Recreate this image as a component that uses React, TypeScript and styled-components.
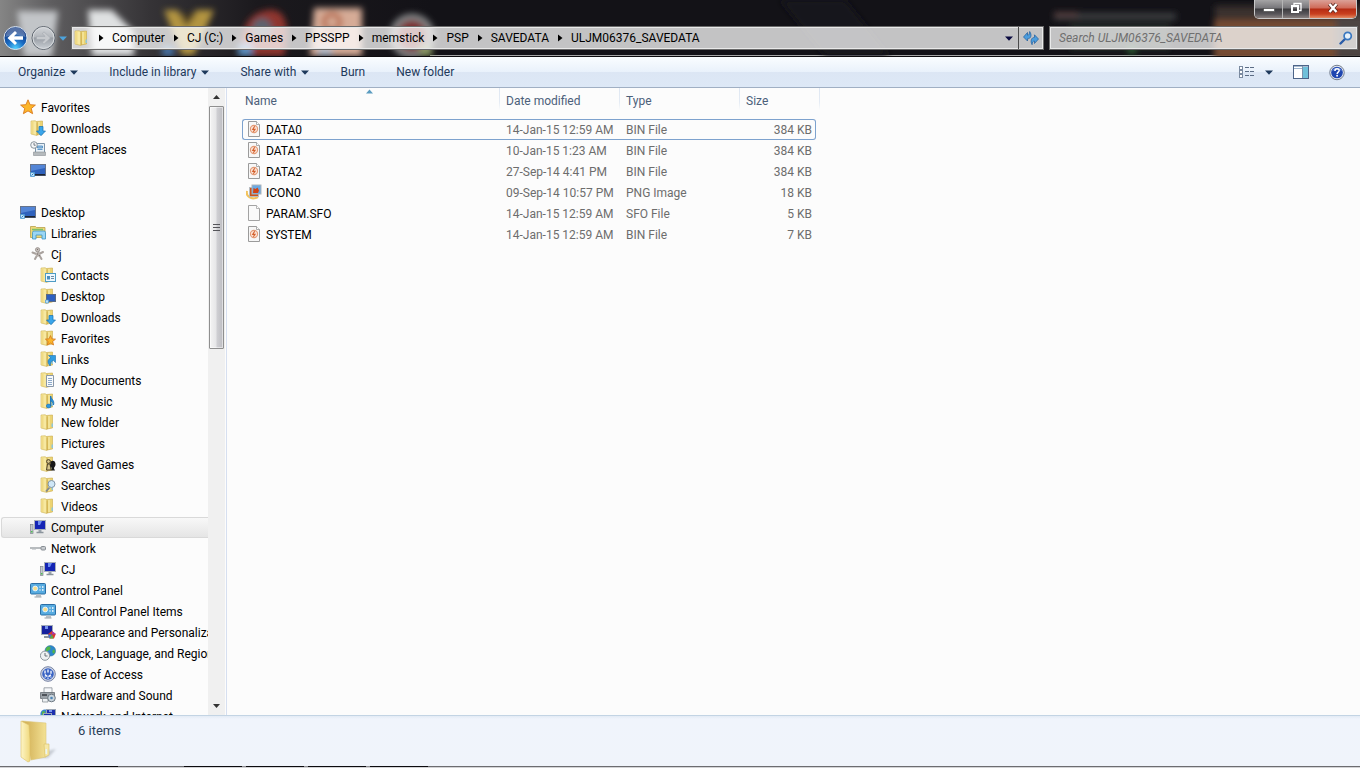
import React from "react";
import styled, { createGlobalStyle } from "styled-components";

const GlobalStyle = createGlobalStyle`
  *, *::before, *::after { box-sizing: border-box; }
  body {
    margin: 0;
    font-family: Roboto, "Noto Sans", sans-serif;
    font-size: 12px;
    line-height: 20px;
    color: #000;
    background: #fcfcfc;
  }
  button, input { font: inherit; color: inherit; }
`;

/* ---------- window frame ---------- */

const Window = styled.div`
  display: flex;
  flex-direction: column;
  height: 100vh;
  overflow: hidden;
`;

const Frame = styled.header`
  position: relative;
  flex: none;
  background: #131217;
  border-bottom: 1px solid #0c0b0e;
  overflow: hidden;
`;

const Wallpaper = styled.div`
  position: absolute;
  inset: 0;
  display: flex;
  justify-content: space-between;
  border-bottom: 1px solid #a5a5a5;
  pointer-events: none;
  svg { flex: none; }
`;

const TitleBar = styled.div`
  position: relative;
  display: flex;
  justify-content: flex-end;
  height: 26px;
  padding-right: 3px;
`;

const WindowButtons = styled.div`
  display: flex;
  height: 19px;
  border: 1px solid #c9c9c9;
  border-top: 0;
  border-radius: 0 0 5px 5px;
  overflow: hidden;
`;

const WindowButton = styled.button<{ $close?: boolean }>`
  display: flex;
  align-items: flex-start;
  justify-content: center;
  width: ${(p) => (p.$close ? 47 : 27)}px;
  padding: 2px 0 0;
  border: 0;
  border-left: 1px solid ${(p) => (p.$close ? "#c9a79f" : "#b5b5b5")};
  background: ${(p) =>
    p.$close
      ? "linear-gradient(#dba197 0, #cf6a58 8px, #b52c14 9px, #c9401f 14px, #e38a62 18px)"
      : "linear-gradient(#a5a4a5 0, #77767a 8px, #3c3b3e 9px, #59565a 14px, #89807f 18px)"};
  &:first-child { border-left: 0; }
`;

const NavBar = styled.div`
  position: relative;
  display: flex;
  align-items: center;
  height: 30px;
  padding: 0 2px 6px 3px;
`;

const NavButton = styled.button`
  display: flex;
  padding: 0;
  border: 0;
  background: none;
`;

const HistoryButton = styled(NavButton)`
  margin: 0 4px 0 2px;
`;

const glass = `
  height: 24px;
  border: 1px solid #6a6a6a;
  box-shadow: inset 0 0 0 1px #e9e9e9;
  background: rgba(255, 255, 255, 0.75);
`;

const AddressBar = styled.nav`
  ${glass}
  display: flex;
  flex: 1;
  align-items: center;
  min-width: 0;
  padding-left: 2px;
`;

const Crumbs = styled.ol`
  display: flex;
  flex: 1;
  margin: 0;
  padding: 0;
  list-style: none;
`;

const Crumb = styled.li`
  display: flex;
  align-items: center;
  svg { margin: 0 8px 0 9px; }
`;

const CrumbLink = styled.a`
  color: #000;
  text-decoration: none;
  white-space: nowrap;
`;

const DropButton = styled(NavButton)`
  padding: 0 5px;
`;

const RefreshButton = styled(NavButton)`
  align-items: center;
  justify-content: center;
  align-self: stretch;
  width: 25px;
  border-left: 1px solid #4b4b4b;
`;

const SearchBox = styled.label`
  ${glass}
  display: flex;
  align-items: center;
  width: 309px;
  margin-left: 5px;
  padding: 0 4px 0 9px;
`;

const SearchInput = styled.input`
  flex: 1;
  min-width: 0;
  padding: 0;
  border: 0;
  outline: 0;
  background: transparent;
  &::placeholder { color: #6f6f6f; font-style: italic; opacity: 1; }
`;

/* ---------- command bar ---------- */

const CommandBar = styled.div`
  display: flex;
  flex: none;
  align-items: center;
  height: 31px;
  padding: 0 15px 0 18px;
  gap: 31px;
  background: linear-gradient(#fafdff 0, #e9f1fb 15px, #dce6f4 15px, #dde8f6 30px);
  border-bottom: 1px solid #a0afc3;
`;

const Command = styled.button`
  display: flex;
  align-items: center;
  gap: 5px;
  padding: 0;
  border: 0;
  background: none;
  color: #1e395b;
  white-space: nowrap;
`;

const ViewTools = styled.div`
  display: flex;
  align-items: center;
  gap: 20px;
  margin-left: auto;
`;

const ViewCommand = styled(Command)`
  gap: 10px;
`;

/* ---------- body ---------- */

const Body = styled.div`
  display: flex;
  flex: 1;
  min-height: 0;
`;

const Sidebar = styled.aside`
  display: flex;
  flex: none;
  width: 227px;
  border-right: 1px solid #d6dff0;
`;

const Tree = styled.ul`
  flex: 1;
  min-width: 0;
  margin: 0;
  padding: 9px 0 0 1px;
  list-style: none;
  overflow: hidden;
`;

const TreeItem = styled.li<{ $gap?: boolean }>`
  margin-top: ${(p) => (p.$gap ? 21 : 0)}px;
`;

const TreeLink = styled.a<{ $level: number; $selected?: boolean }>`
  display: flex;
  align-items: center;
  gap: 5px;
  height: 21px;
  padding-left: ${(p) => 18 + p.$level * 10}px;
  border: 1px solid ${(p) => (p.$selected ? "#d9d9d9" : "transparent")};
  border-right: 0;
  border-radius: 3px 0 0 3px;
  background: ${(p) => (p.$selected ? "linear-gradient(#f8f8f8, #e5e5e5)" : "none")};
  color: #000;
  text-decoration: none;
  white-space: nowrap;
  overflow: hidden;
  svg { flex: none; margin-bottom: 1px; }
`;

const ScrollTrack = styled.div`
  display: flex;
  flex-direction: column;
  flex: none;
  width: 17px;
  margin-right: 1px;
  padding: 0 1px;
  background: #f0f0f0;
`;

const ScrollButton = styled.button`
  display: flex;
  align-items: center;
  justify-content: center;
  flex: none;
  height: 18px;
  padding: 0;
  border: 0;
  background: none;
`;

const ScrollThumb = styled.div`
  display: flex;
  align-items: center;
  justify-content: center;
  flex: 9;
  border: 1px solid #8f8f8f;
  border-radius: 1px;
  background: linear-gradient(90deg, #f4f4f4 0, #e6e6e8 6px, #cfcfd3 7px, #bdbdc2 13px);
  box-shadow: inset 0 0 0 1px rgba(255, 255, 255, 0.5);
`;

const ScrollRest = styled.div`
  flex: 13;
`;

const Content = styled.main`
  flex: 1;
  min-width: 0;
  padding-left: 15px;
  background: #fcfcfc;
`;

const FileTable = styled.table`
  width: 578px;
  table-layout: fixed;
  border-collapse: separate;
  border-spacing: 0;
`;

const HeadCell = styled.th<{ $first?: boolean }>`
  position: relative;
  height: 31px;
  padding: 3px 6px 8px ${(p) => (p.$first ? 3 : 6)}px;
  font-weight: 400;
  text-align: left;
  color: #4c607a;
  background: linear-gradient(#dfe7f2, #e4ebf4 14px, #fcfcfc 22px) right top / 1px 22px no-repeat;
`;

const SortMark = styled.svg`
  position: absolute;
  top: 1px;
  left: calc(50% - 5px);
`;

const Cell = styled.td<{ $focus?: boolean; $align?: string }>`
  height: 21px;
  padding: 2px 3px 0 6px;
  line-height: 17px;
  text-align: ${(p) => p.$align ?? "left"};
  color: #6d6d6d;
  white-space: nowrap;
  border: 0 solid ${(p) => (p.$focus ? "#7da2ce" : "transparent")};
  border-width: 1px 0;
  &:first-child {
    padding-left: 3px;
    border-left-width: 1px;
    border-radius: 3px 0 0 3px;
    color: #000;
  }
  &:last-child {
    border-right-width: 1px;
    border-radius: 0 3px 3px 0;
  }
`;

const FileName = styled.span`
  display: flex;
  align-items: flex-start;
  gap: 4px;
  height: 17px;
  svg { flex: none; margin-top: -1px; }
`;

/* ---------- details pane ---------- */

const Details = styled.footer`
  display: flex;
  flex: none;
  gap: 19px;
  height: 51px;
  padding: 4px 19px 0;
  border-top: 1px solid #c3d4e4;
  background: linear-gradient(#e3ebf5 0, #f0f4fc 3px, #f0f4fb 100%);
  color: #2b3e58;
  font-size: 13px;
`;

const ItemCount = styled.p`
  margin: 1px 0 0;
`;

const DesktopEdge = styled.div`
  flex: none;
  height: 2px;
  border-bottom: 1px solid #d3d3d6;
  background: linear-gradient(
    90deg, #6c6c70 0 60px, #0c0b0e 60px 118px, #6c6c70 118px 184px,
    #0c0b0e 184px 242px, #8f8f93 242px 246px, #0c0b0e 246px 304px,
    #8f8f93 304px 308px, #0c0b0e 308px 366px, #8f8f93 366px 370px,
    #0c0b0e 370px 428px, #6c6c70 428px
  );
`;

/* ---------- small glyphs ---------- */

const DownArrow = ({ fill = "#1e395b" }: { fill?: string }) => (
  <svg width="8" height="5" aria-hidden="true">
    <path d="M0 0.500h8L4 4.800z" fill={fill} />
  </svg>
);

const CrumbArrow = () => (
  <svg width="5" height="8" aria-hidden="true">
    <path d="M0 0.500L4.500 4L0 7.500z" fill="#000" />
  </svg>
);

const BlurredDesktopLeft = () => (
  <svg width="900" height="56" aria-hidden="true">
    <defs>
      <filter id="soft" x="-30%" y="-30%" width="160%" height="160%">
        <feGaussianBlur stdDeviation="3" />
      </filter>
      <filter id="softText" x="-10%" y="-100%" width="120%" height="300%">
        <feGaussianBlur stdDeviation="1.800" />
      </filter>
      <linearGradient id="sky" x1="0" x2="1">
        <stop offset="0" stopColor="#858585" />
        <stop offset="0.120" stopColor="#5e5d5f" />
        <stop offset="0.350" stopColor="#353336" />
        <stop offset="0.600" stopColor="#1b191d" />
        <stop offset="1" stopColor="#131217" />
      </linearGradient>
    </defs>
    <rect width="430" height="56" fill="url(#sky)" />
    <g filter="url(#soft)">
      <path d="M17 11h41l-6 46H24z" fill="#c2c5c8" />
      <path d="M88 10h24l22 22v24H92z" fill="#dfe1e2" />
      <path d="M164 10h14l8 16 10-16h18l-20 45h-12z" fill="#b3943f" />
      <path d="M180 14h16l-9 12z" fill="#4a3a20" />
      <path d="M162 46h12v10h-12z" fill="#4674a8" />
      <path d="M268 10c20-2 22 20 16 46h-42c-4-24 6-44 26-46z" fill="#8f342d" />
      <circle cx="262" cy="28" r="10" fill="#5b6470" />
      <path d="M238 44h14v12h-14z" fill="#5b8fc0" />
      <path d="M314 8h48v48h-52z" fill="#d6ab96" />
      <circle cx="332" cy="22" r="8" fill="none" stroke="#b05a36" strokeWidth="4" />
      <path d="M318 46h14v10h-14z" fill="#b4bcc8" />
      <circle cx="412" cy="36" r="19" fill="#7c2a2a" stroke="#808283" strokeWidth="7" />
      <path d="M420 46h12v10h-12z" fill="#8a9a64" />
    </g>
    <path
      d="M597 7h166"
      stroke="#59585c"
      strokeWidth="5"
      strokeDasharray="14 2 9 3 22 2"
      filter="url(#softText)"
    />
    <path d="M780 0h65l45 56h-65z" fill="#19181c" filter="url(#soft)" />
  </svg>
);

const BlurredDesktopRight = () => (
  <svg width="330" height="56" aria-hidden="true">
    <g filter="url(#soft)">
      <rect x="24" y="13" width="122" height="7" fill="#3a3c40" />
      <rect x="24" y="12" width="24" height="5" fill="#543c3c" />
      <rect x="40" y="24" width="100" height="26" fill="#242928" />
      <circle cx="102" cy="51" r="3" fill="#357a3e" />
      <rect x="185" y="6" width="160" height="15" fill="#3a302d" />
      <rect x="184" y="20" width="122" height="40" fill="#764b31" />
      <rect x="306" y="16" width="30" height="44" fill="#4d4442" />
    </g>
  </svg>
);

const BackIcon = () => (
  <svg width="25" height="26" viewBox="0 0 25 26" aria-hidden="true">
    <defs>
      <radialGradient id="orb" cx="0.500" cy="0.950" r="0.750">
        <stop offset="0" stopColor="#4fd0ff" />
        <stop offset="0.500" stopColor="#1a6cc4" />
        <stop offset="1" stopColor="#143c86" />
      </radialGradient>
    </defs>
    <circle cx="12.500" cy="13" r="11.500" fill="url(#orb)" stroke="#dde6ef" strokeWidth="1" />
    <path d="M2.500 12a10 10 0 0 1 20 0c-6-2-14-2-20 0z" fill="#fff" opacity="0.280" />
    <path d="M4.500 13l7.500-7 2 2-3 3.200h9v3.600h-9l3 3.200-2 2z" fill="#fff" />
  </svg>
);

const ForwardIcon = () => (
  <svg width="29" height="26" viewBox="0 0 29 26" aria-hidden="true">
    <defs>
      <linearGradient id="pale" x1="0" y1="0" x2="0" y2="1">
        <stop offset="0" stopColor="#d3d6da" />
        <stop offset="0.450" stopColor="#b4b8bd" />
        <stop offset="0.500" stopColor="#989da4" />
        <stop offset="1" stopColor="#ccd1d7" />
      </linearGradient>
    </defs>
    <circle cx="15.500" cy="13" r="11.500" fill="url(#pale)" stroke="#5e656e" />
    <circle cx="15.500" cy="13" r="10.500" fill="none" stroke="#d9dcdf" />
    <path d="M22.500 13l-6.500-6.200-1.800 1.800 2.900 2.800H8.500v3.200h8.600l-2.900 2.800 1.800 1.800z" fill="#c6c9cd" stroke="#a3a8ae" strokeWidth="0.600" />
  </svg>
);

const RefreshIcon = () => (
  <svg width="16" height="16" viewBox="0 0 16 16" aria-hidden="true">
    <path d="M0.500 7L4.500 2.500v2.700c1.500 0 2-1.200 2.200-3.700 2.300 3.300 1.500 7.300-2.200 7.300V11z" fill="#4b9ddd" stroke="#1f5c9c" strokeWidth="0.700" />
    <path d="M15.500 9L11.500 4.800v2.600c-3.500 0-4.300 4-2.400 7.300.2-2.500 1-3.700 2.400-3.700v2.500z" fill="#4b9ddd" stroke="#1f5c9c" strokeWidth="0.700" />
  </svg>
);

const SearchIcon = () => (
  <svg width="14" height="14" viewBox="0 0 14 14" aria-hidden="true">
    <path d="M1.500 12.500L6 8" stroke="#2a5ca8" strokeWidth="2.400" strokeLinecap="round" />
    <circle cx="8.700" cy="5" r="3.600" fill="#e6f1fa" stroke="#3a78c0" strokeWidth="1.700" />
  </svg>
);

const ViewsIcon = () => (
  <svg width="16" height="14" viewBox="0 0 16 14" aria-hidden="true">
    {[1, 5, 9].map((y) => (
      <g key={y}>
        <rect x="0.500" y={y + 0.5} width="3" height="3" fill="#fff" stroke="#7a8aa0" />
        <path d={`M6 ${y + 1.5}h4M11 ${y + 1.5}h4`} stroke="#5c6d85" />
      </g>
    ))}
  </svg>
);

const PaneIcon = () => (
  <svg width="16" height="14" viewBox="0 0 16 14" aria-hidden="true">
    <rect x="0.500" y="0.500" width="15" height="13" fill="#fff" stroke="#4c6488" />
    <path d="M1 1.500h14" stroke="#a9bcd2" />
    <path d="M1 3.500h8" stroke="#9db4cc" />
    <rect x="10" y="2" width="5" height="11" fill="#6fc0da" />
    <path d="M9.500 1v12" stroke="#7d93ad" />
  </svg>
);

const HelpIcon = () => (
  <svg width="16" height="17" viewBox="0 0 17 17" aria-hidden="true">
    <circle cx="8.500" cy="8.500" r="7.700" fill="#e8ecf2" stroke="#6c7688" />
    <circle cx="8.500" cy="8.500" r="6.200" fill="#1f46b0" />
    <path d="M3 7a6 6 0 0 1 11 0c-3-1.500-8-1.500-11 0z" fill="#7f9ce0" opacity="0.700" />
    <path d="M6.300 6.800c0-3 4.500-3 4.500-.3 0 1.700-2.200 1.700-2.200 3.600" fill="none" stroke="#fff" strokeWidth="1.600" />
    <circle cx="8.600" cy="12" r="1" fill="#fff" />
  </svg>
);

/* ---------- item icons ---------- */

type IconName =
  | "folder" | "folder-down" | "folder-contact" | "folder-screen" | "folder-star" | "folder-link"
  | "folder-doc" | "folder-music" | "folder-chess" | "folder-search" | "star" | "recent"
  | "desktop" | "libraries" | "user" | "computer" | "network" | "panel" | "appearance" | "clock"
  | "access" | "hardware" | "internet" | "bin" | "image" | "blank";

const star = "M8 0.800l2.100 4.900 5.300.4-4.100 3.400 1.300 5.200L8 11.900l-4.600 2.800 1.300-5.200L.6 6.100l5.300-.4z";

const Screen = () => (
  <>
    <rect x="0.500" y="2.500" width="15" height="11" fill="#2f62bd" stroke="#66738a" />
    <path d="M1 3h14v3L1 9z" fill="#6c9de6" opacity="0.600" />
    <path d="M1 12h14v1.500H1z" fill="#1d2533" />
    <path d="M0.500 10.500h4v4h-4z" fill="#bfe2fa" stroke="#4a98d0" strokeWidth="0.800" />
    <path d="M1.500 13.500l2-2" stroke="#2a7cc0" />
  </>
);

const FolderShape = () => (
  <>
    <path d="M6.500 1.500L12.500 1v13L7 15z" fill="#ecd472" stroke="#c9aa48" strokeWidth="0.600" />
    <path d="M9 2v12" stroke="#f6e8a4" strokeWidth="1.400" />
    <path d="M1 1L5.500 0.800 7 2.500V15.500L1 14z" fill="#f7e8a0" stroke="#cdb04c" strokeWidth="0.600" />
    <path d="M2.500 1.500v12.500" stroke="#f0da84" strokeWidth="2" />
    <path d="M7 2.500v12.500" stroke="#c8a544" strokeWidth="0.700" />
    <path d="M11.500 9.500h1.500v3.500h-1.500z" fill="#8fc6d8" />
  </>
);

const Monitor = () => (
  <>
    <rect x="0.500" y="5.500" width="2.500" height="9" fill="#c3cad0" stroke="#7f878e" strokeWidth="0.700" />
    <path d="M1 12h1.500v1.500H1z" fill="#4fc24f" />
    <rect x="4.500" y="1.500" width="11" height="9" fill="#1424b4" stroke="#a9b0bb" />
    <path d="M8 2h4l-2 4H8z" fill="#6c8cf0" />
    <path d="M8.500 11h3v2h-3z" fill="#9aa3ac" />
    <path d="M6.500 13.500h7" stroke="#8b949c" strokeWidth="1.500" />
  </>
);

const shapes: Record<IconName, React.ReactNode> = {
  folder: null,
  "folder-down": <path d="M9 6.500h4v4.500h2.500L11 15.700 6.500 11H9z" fill="#3aa5ea" stroke="#1670b0" strokeWidth="0.700" />,
  "folder-contact": (
    <>
      <rect x="5.500" y="6.500" width="10" height="8" fill="#eef7fd" stroke="#4f9cc4" />
      <path d="M7 9h3v3.500H7z" fill="#4b8fc0" />
      <path d="M11 9.500h3M11 11.500h3" stroke="#6f8da5" />
    </>
  ),
  "folder-screen": (
    <>
      <rect x="6.500" y="6.500" width="9" height="7" fill="#2c5fc0" stroke="#5b6a80" />
      <path d="M5.500 12h3v3h-3z" fill="#bfe2fa" stroke="#4a98d0" strokeWidth="0.700" />
    </>
  ),
  "folder-star": <path d={star} transform="translate(5 5) scale(0.680)" fill="#fbb52a" stroke="#d5761a" strokeWidth="1.200" />,
  "folder-link": <path d="M8.500 4.500h7v7l-2.300-2.200c-2 1-2.700 2.700-3 5.700-3.200-3.200-2.700-6.700.6-8.200z" fill="#2f9be0" stroke="#1b6fb0" strokeWidth="0.600" />,
  "folder-doc": (
    <>
      <path d="M6.500 3.500h7v11h-7z" fill="#f8fafc" stroke="#8a98a8" />
      <path d="M8 6.500h4M8 8.500h4M8 10.500h4M8 12.500h4" stroke="#7f9fc4" strokeWidth="0.900" />
    </>
  ),
  "folder-music": (
    <>
      <path d="M10.500 3c.2 3 4.500 4 3 9-.2-2.500-1.300-3.500-3-4" fill="#2b98e0" stroke="#1c72b5" strokeWidth="0.800" />
      <ellipse cx="8.700" cy="13" rx="2.400" ry="1.900" fill="#2b98e0" stroke="#1c72b5" strokeWidth="0.600" />
      <path d="M10.700 3v10" stroke="#1c72b5" strokeWidth="1.200" />
    </>
  ),
  "folder-chess": (
    <>
      <circle cx="8.500" cy="5.500" r="1.900" fill="#d7c58a" stroke="#4c4128" />
      <path d="M7.500 8h2.500l1 6H6.500z" fill="#d7c58a" stroke="#4c4128" />
      <path d="M10.500 6c2-2.500 5.500-1 5 3-.5 2-1.500 2-1.500 3.500l1 2h-4l.8-2.500-1.800-2z" fill="#181818" />
    </>
  ),
  "folder-search": (
    <>
      <path d="M6 14.500l3.500-4" stroke="#808890" strokeWidth="1.800" />
      <circle cx="11.500" cy="7" r="3.500" fill="#cfe7f7" stroke="#8296a8" />
    </>
  ),
  star: <path d={star} fill="#fcb62b" stroke="#d9781c" strokeWidth="0.900" />,
  recent: (
    <>
      <path d="M5.500 2.500h9v9h-9z" fill="#e9f1f8" stroke="#7c93a8" />
      <path d="M7.500 5h5v2h-5zM7.500 8.500h5" fill="#9cc2e2" stroke="#4f8fc4" strokeWidth="0.900" />
      <path d="M3.500 11h12v3.500h-12z" fill="#b5babd" stroke="#8b9195" strokeWidth="0.600" />
      <circle cx="4" cy="4" r="3.300" fill="#f4f6f8" stroke="#8b959c" />
      <path d="M4 2v2.200h1.700" fill="none" stroke="#555e66" strokeWidth="0.800" />
    </>
  ),
  desktop: <Screen />,
  libraries: (
    <>
      <path d="M0.500 1.500h5l1 1h8.500v10H0.500z" fill="#eed878" stroke="#b9a14a" strokeWidth="0.800" />
      <path d="M2 4.500h11" stroke="#7cc069" strokeWidth="1.300" />
      <path d="M2.500 7.500q0-1.500 1.500-1.500h10q1.500 0 1.500 1.500V14h-3.500v-4h-6v4H2.500z" fill="#9bd6f5" stroke="#3c95c4" strokeWidth="0.800" />
    </>
  ),
  user: (
    <>
      <path d="M7.500 4.500l1 3M2.500 6.500l4 1.500M5 13l2-3.500M11.500 13L9.500 9.500M13 6L9 8" stroke="#a9a29e" strokeWidth="2" strokeLinecap="round" />
      <circle cx="7.600" cy="3.800" r="2.200" fill="#c3bcb8" stroke="#8d8581" strokeWidth="0.700" />
      <circle cx="7.900" cy="8.500" r="2.200" fill="#b8b1ad" />
      <path d="M7 8h.9M8.800 9.500h.9M7 3.500h.8" stroke="#6a625e" />
    </>
  ),
  computer: <Monitor />,
  network: (
    <>
      <path d="M0 8h11" stroke="#a2a7ab" strokeWidth="1.600" />
      <rect x="11" y="6.500" width="4.500" height="3.500" rx="1" fill="#c8ccd0" stroke="#888e94" />
      <path d="M2 9.500h4" stroke="#d3d6d9" />
    </>
  ),
  panel: (
    <>
      <rect x="0.500" y="1.500" width="15" height="10.500" rx="1" fill="#57abe0" stroke="#2b6ea5" />
      <circle cx="5.200" cy="6.500" r="2.400" fill="#f5dd8a" stroke="#e8f5ff" />
      <path d="M9.500 5h1M12 5h1.500M9.500 8h1M12 8h1.500" stroke="#fff" strokeWidth="1.300" />
      <path d="M6 12.300h5v2.500H6z" fill="#b9c0c6" />
      <path d="M4.500 15h7" stroke="#9aa2a9" />
    </>
  ),
  appearance: (
    <>
      <rect x="1.500" y="1.500" width="11" height="9" fill="#16219e" stroke="#a2abb8" />
      <path d="M5 2h3v3H5z" fill="#7592f0" />
      <path d="M4 13h6" stroke="#8d969e" strokeWidth="2" />
      <path d="M12 7l3.800 3-1.800 4.500H9.500L8 10z" fill="#d93a2e" />
      <path d="M12 10.500l-4 0 1.500 4z" fill="#3b73dc" />
      <path d="M12 10.500l-2.500 4h4z" fill="#57b246" />
      <path d="M12 7v3.500l3.800-.5z" fill="#a33cae" />
    </>
  ),
  clock: (
    <>
      <circle cx="10.300" cy="5.800" r="5.300" fill="#2c86cc" stroke="#2a6a98" strokeWidth="0.500" />
      <path d="M8 1.500c3-.5 3 1.500 2 3s-3 1-3.500 3C5 5.500 6 2.500 8 1.500zM13 4.500c2 0 2.500 2 1.300 4-2 .3-2.500-2-1.300-4z" fill="#51b648" />
      <circle cx="5" cy="10.700" r="4.600" fill="#eef1f3" stroke="#8b959d" />
      <path d="M5 8v3h2.500" fill="none" stroke="#5a646c" strokeWidth="0.900" />
    </>
  ),
  access: (
    <>
      <circle cx="8" cy="8" r="7.300" fill="#d6dbe8" stroke="#7481a3" />
      <circle cx="8" cy="8" r="5.800" fill="#3a64c4" />
      <path d="M5 4.500v4q3 4 6 0v-4M8 3.500v4" fill="none" stroke="#fff" strokeWidth="1.300" strokeDasharray="3 1" />
      <path d="M5.500 11.500l-.8-.8M10.500 11.500l.8-.8M8 13v-1.500" stroke="#dfe7fa" strokeWidth="1.200" />
    </>
  ),
  hardware: (
    <>
      <path d="M4 0.800h8V6H4z" fill="#f6f8fa" stroke="#8a9299" strokeWidth="0.800" />
      <path d="M0.500 5.500h14v6h-14z" fill="#9aa1a7" stroke="#666d74" strokeWidth="0.800" />
      <path d="M2 8h5" stroke="#343a40" strokeWidth="1.500" />
      <path d="M2.500 11.500H8V15H2.500z" fill="#eef1f3" stroke="#7c848b" strokeWidth="0.700" />
      <circle cx="11.500" cy="11" r="3.800" fill="#c9d4dc" stroke="#6c7780" />
      <circle cx="11.500" cy="11" r="1.300" fill="#4d84b5" />
    </>
  ),
  internet: (
    <>
      <circle cx="5" cy="6" r="4.600" fill="#3583cc" />
      <path d="M2 4c2-2 3-1 3 .5S3 7 2 8z" fill="#56b64c" />
      <rect x="6.500" y="1.500" width="9" height="7" fill="#1c2fae" stroke="#9aa5b4" />
      <path d="M9 2h3v2H9z" fill="#7c98f0" />
      <rect x="3.500" y="5.500" width="8" height="6" fill="#1c2fae" stroke="#9aa5b4" />
    </>
  ),
  bin: (
    <>
      <path d="M2.500 0.500h8l3 3v12h-11z" fill="#f7f7f7" stroke="#9b9b9b" />
      <path d="M10.500 0.500v3h3" fill="#fff" stroke="#9b9b9b" strokeWidth="0.800" />
      <circle cx="8" cy="8" r="3.600" fill="#fbe3d6" stroke="#e39a76" strokeWidth="1.100" />
      <path d="M8.700 5.300L6.800 8.300h2.200L7.400 10.800" fill="none" stroke="#d4602c" strokeWidth="1.200" />
    </>
  ),
  image: (
    <>
      <path d="M1 7c-1.500 5 4 9.500 11 6" fill="none" stroke="#f2c35c" strokeWidth="2.200" />
      <rect x="3.500" y="3.500" width="9" height="9" fill="#c9551e" stroke="#b7bcc2" />
      <rect x="6" y="1" width="9" height="9" fill="#69a9e4" stroke="#aeb4ba" />
      <path d="M7 9l0.500-5 2 1 2-1.500 1.500 3-1 2.500z" fill="#d24314" />
    </>
  ),
  blank: (
    <>
      <path d="M2.500 0.500h8l3 3v12h-11z" fill="#fafafa" stroke="#a3a3a3" />
      <path d="M10.500 0.500v3h3" fill="#fff" stroke="#a3a3a3" strokeWidth="0.800" />
    </>
  ),
};

const Icon = ({ name }: { name: IconName }) => (
  <svg width="16" height="16" viewBox="0 0 16 16" aria-hidden="true">
    {name.startsWith("folder") && <FolderShape />}
    {shapes[name]}
  </svg>
);

const LargeFolder = () => (
  <svg width="40" height="44" viewBox="0 0 40 44" aria-hidden="true">
    <defs>
      <linearGradient id="cover" x1="0" x2="1">
        <stop offset="0" stopColor="#fdf5c6" />
        <stop offset="1" stopColor="#f0d97e" />
      </linearGradient>
      <linearGradient id="inside" x1="0" x2="1">
        <stop offset="0" stopColor="#cda94e" />
        <stop offset="1" stopColor="#f3e194" />
      </linearGradient>
      <filter id="shade" x="-20%" y="-20%" width="140%" height="140%">
        <feGaussianBlur stdDeviation="1.200" />
      </filter>
    </defs>
    <path d="M28 31l9-2-8 9H14z" fill="#b4b9c2" opacity="0.700" filter="url(#shade)" />
    <path d="M3 1l24 2v34l-15 3z" fill="url(#inside)" stroke="#dcc679" strokeWidth="0.600" />
    <path d="M25 24h5v11l-4 2z" fill="#f6e8a8" stroke="#d9bf66" strokeWidth="0.600" />
    <path d="M26.500 29h1.500v5h-1.500z" fill="#e8f4f4" />
    <path d="M2 1l8 4 1 15v21l-2 1-7-5z" fill="url(#cover)" stroke="#dcc166" strokeWidth="0.600" />
  </svg>
);

/* ---------- data ---------- */

const path = ["Computer", "CJ (C:)", "Games", "PPSSPP", "memstick", "PSP", "SAVEDATA", "ULJM06376_SAVEDATA"];

const commands = [
  { label: "Organize", menu: true },
  { label: "Include in library", menu: true },
  { label: "Share with", menu: true },
  { label: "Burn" },
  { label: "New folder" },
];

const tree: { label: string; icon: IconName; level: number; gap?: boolean; selected?: boolean }[] = [
  { label: "Favorites", icon: "star", level: 0 },
  { label: "Downloads", icon: "folder-down", level: 1 },
  { label: "Recent Places", icon: "recent", level: 1 },
  { label: "Desktop", icon: "desktop", level: 1 },
  { label: "Desktop", icon: "desktop", level: 0, gap: true },
  { label: "Libraries", icon: "libraries", level: 1 },
  { label: "Cj", icon: "user", level: 1 },
  { label: "Contacts", icon: "folder-contact", level: 2 },
  { label: "Desktop", icon: "folder-screen", level: 2 },
  { label: "Downloads", icon: "folder-down", level: 2 },
  { label: "Favorites", icon: "folder-star", level: 2 },
  { label: "Links", icon: "folder-link", level: 2 },
  { label: "My Documents", icon: "folder-doc", level: 2 },
  { label: "My Music", icon: "folder-music", level: 2 },
  { label: "New folder", icon: "folder", level: 2 },
  { label: "Pictures", icon: "folder", level: 2 },
  { label: "Saved Games", icon: "folder-chess", level: 2 },
  { label: "Searches", icon: "folder-search", level: 2 },
  { label: "Videos", icon: "folder", level: 2 },
  { label: "Computer", icon: "computer", level: 1, selected: true },
  { label: "Network", icon: "network", level: 1 },
  { label: "CJ", icon: "computer", level: 2 },
  { label: "Control Panel", icon: "panel", level: 1 },
  { label: "All Control Panel Items", icon: "panel", level: 2 },
  { label: "Appearance and Personalization", icon: "appearance", level: 2 },
  { label: "Clock, Language, and Region", icon: "clock", level: 2 },
  { label: "Ease of Access", icon: "access", level: 2 },
  { label: "Hardware and Sound", icon: "hardware", level: 2 },
  { label: "Network and Internet", icon: "internet", level: 2 },
];

const files: { name: string; icon: IconName; date: string; type: string; size: string; focus?: boolean }[] = [
  { name: "DATA0", icon: "bin", date: "14-Jan-15 12:59 AM", type: "BIN File", size: "384 KB", focus: true },
  { name: "DATA1", icon: "bin", date: "10-Jan-15 1:23 AM", type: "BIN File", size: "384 KB" },
  { name: "DATA2", icon: "bin", date: "27-Sep-14 4:41 PM", type: "BIN File", size: "384 KB" },
  { name: "ICON0", icon: "image", date: "09-Sep-14 10:57 PM", type: "PNG Image", size: "18 KB" },
  { name: "PARAM.SFO", icon: "blank", date: "14-Jan-15 12:59 AM", type: "SFO File", size: "5 KB" },
  { name: "SYSTEM", icon: "bin", date: "14-Jan-15 12:59 AM", type: "BIN File", size: "7 KB" },
];

export default function App() {
  return (
    <Window>
      <GlobalStyle />
      <Frame>
        <Wallpaper>
          <BlurredDesktopLeft />
          <BlurredDesktopRight />
        </Wallpaper>
        <TitleBar>
          <WindowButtons>
            <WindowButton aria-label="Minimize">
              <svg width="12" height="12">
                <rect x="0.500" y="6.500" width="11" height="3" fill="#fff" stroke="#4a4a4a" strokeWidth="0.700" />
              </svg>
            </WindowButton>
            <WindowButton aria-label="Restore">
              <svg width="12" height="12" fill="none">
                <path d="M4 3V1.500h7v7H9" stroke="#fff" strokeWidth="1.300" />
                <rect x="2" y="4" width="6" height="6" stroke="#fff" strokeWidth="2" />
              </svg>
            </WindowButton>
            <WindowButton $close aria-label="Close">
              <svg width="12" height="12">
                <path d="M2.500 2l7 8M9.500 2l-7 8" stroke="#5a2a22" strokeWidth="4" />
                <path d="M2.500 2l7 8M9.500 2l-7 8" stroke="#fff" strokeWidth="2.400" />
              </svg>
            </WindowButton>
          </WindowButtons>
        </TitleBar>
        <NavBar>
          <NavButton aria-label="Back"><BackIcon /></NavButton>
          <NavButton aria-label="Forward"><ForwardIcon /></NavButton>
          <HistoryButton aria-label="Recent pages"><DownArrow fill="#4da3dc" /></HistoryButton>
          <AddressBar aria-label="Address">
            <Icon name="folder" />
            <Crumbs>
              {path.map((part) => (
                <Crumb key={part}>
                  <CrumbArrow />
                  <CrumbLink href="#">{part}</CrumbLink>
                </Crumb>
              ))}
            </Crumbs>
            <DropButton aria-label="Previous locations"><DownArrow fill="#0a0a40" /></DropButton>
            <RefreshButton aria-label="Refresh"><RefreshIcon /></RefreshButton>
          </AddressBar>
          <SearchBox>
            <SearchInput placeholder="Search ULJM06376_SAVEDATA" aria-label="Search" />
            <SearchIcon />
          </SearchBox>
        </NavBar>
      </Frame>

      <CommandBar>
        {commands.map((c) => (
          <Command key={c.label}>
            {c.label}
            {c.menu && <DownArrow />}
          </Command>
        ))}
        <ViewTools>
          <ViewCommand aria-label="Change your view"><ViewsIcon /><DownArrow /></ViewCommand>
          <Command aria-label="Preview pane"><PaneIcon /></Command>
          <Command aria-label="Help"><HelpIcon /></Command>
        </ViewTools>
      </CommandBar>

      <Body>
        <Sidebar>
          <Tree>
            {tree.map((t, i) => (
              <TreeItem key={i} $gap={t.gap}>
                <TreeLink href="#" $level={t.level} $selected={t.selected}>
                  <Icon name={t.icon} />
                  {t.label}
                </TreeLink>
              </TreeItem>
            ))}
          </Tree>
          <ScrollTrack>
            <ScrollButton aria-label="Scroll up">
              <svg width="7" height="4"><path d="M0 4h7L3.500 0z" fill="#333" /></svg>
            </ScrollButton>
            <ScrollThumb>
              <svg width="7" height="9">
                <path d="M0 1.500h7M0 4.500h7M0 7.500h7" stroke="#55555a" />
              </svg>
            </ScrollThumb>
            <ScrollRest />
            <ScrollButton aria-label="Scroll down">
              <svg width="7" height="4"><path d="M0 0h7L3.500 4z" fill="#333" /></svg>
            </ScrollButton>
          </ScrollTrack>
        </Sidebar>

        <Content>
          <FileTable>
            <colgroup>
              <col style={{ width: 258 }} />
              <col style={{ width: 120 }} />
              <col style={{ width: 120 }} />
              <col style={{ width: 76 }} />
              <col style={{ width: 4 }} />
            </colgroup>
            <thead>
              <tr>
                <HeadCell $first aria-sort="ascending">
                  Name
                  <SortMark width="7" height="5" aria-hidden="true">
                    <path d="M0 4.500h7L3.500 0.500z" fill="#5b9cc0" />
                  </SortMark>
                </HeadCell>
                <HeadCell>Date modified</HeadCell>
                <HeadCell>Type</HeadCell>
                <HeadCell colSpan={2}>Size</HeadCell>
              </tr>
            </thead>
            <tbody>
              {files.map((f) => (
                <tr key={f.name}>
                  <Cell $focus={f.focus}>
                    <FileName>
                      <Icon name={f.icon} />
                      {f.name}
                    </FileName>
                  </Cell>
                  <Cell $focus={f.focus}>{f.date}</Cell>
                  <Cell $focus={f.focus}>{f.type}</Cell>
                  <Cell $focus={f.focus} $align="right">{f.size}</Cell>
                </tr>
              ))}
            </tbody>
          </FileTable>
        </Content>
      </Body>

      <Details>
        <LargeFolder />
        <ItemCount>6 items</ItemCount>
      </Details>
      <DesktopEdge />
    </Window>
  );
}
